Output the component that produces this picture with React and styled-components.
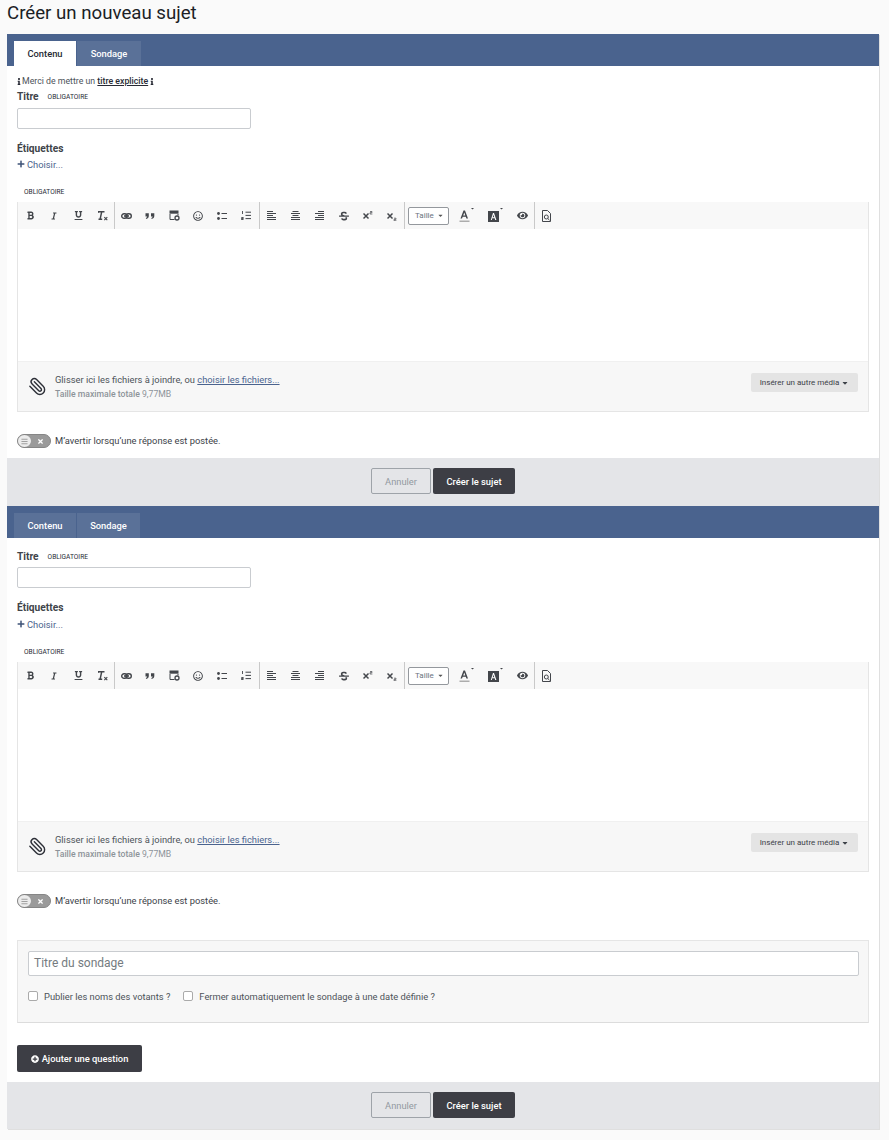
import React from "react";
import styled, { createGlobalStyle } from "styled-components";
import {
  FaBold,
  FaItalic,
  FaUnderline,
  FaRegSmile,
  FaStrikethrough,
  FaEye,
  FaPlus,
  FaPlusCircle,
  FaInfo,
  FaCaretDown,
  FaTimes,
  FaBars,
} from "react-icons/fa";
import { Paperclip } from "lucide-react";

const GlobalStyle = createGlobalStyle`
  html, body {
    margin: 0;
    padding: 0;
    background: #fafafa;
    font-family: Roboto, "Liberation Sans", sans-serif;
    color: #272a34;
  }
`;

const Page = styled.div`
  width: 889px;
  height: 1140px;
  overflow: hidden;
`;

const PageTitle = styled.h1`
  margin: 0;
  padding: 0 0 0 7px;
  height: 34px;
  font-size: 18.67px;
  line-height: 26px;
  font-weight: 400;
  color: #1c1f26;
`;

const Panel = styled.div`
  width: 872px;
  margin-left: 7px;
  background: #fff;
  box-shadow: 1px 1px 0 #dfdfdf;
`;

const TabBar = styled.div`
  display: flex;
  align-items: flex-end;
  gap: 1px;
  height: 32px;
  padding-left: 7px;
  background: #4a638e;
`;

const Tab = styled.div`
  width: ${(p) => p.$width}px;
  height: 25px;
  display: flex;
  align-items: center;
  justify-content: center;
  font-size: 9.33px;
  font-weight: 500;
  color: ${(p) => (p.$active ? "#272a34" : "#fff")};
  background: ${(p) => (p.$active ? "#fff" : "#5a7198")};
`;

const Body = styled.div`
  padding: ${(p) => p.$top}px 10px 0;
`;

const Notice = styled.div`
  display: flex;
  align-items: center;
  height: 12px;
  margin-bottom: 2px;
  font-size: 8.75px;
  white-space: pre;
  color: #4d5359;

  svg {
    font-size: 7px;
    width: 4px;
    color: #272a34;
  }

  a {
    font-weight: 500;
    color: #272a34;
    text-decoration: underline;
  }
`;

const NoticeText = styled.span`
  margin: 0 2px 0 1px;
`;

const FieldLabel = styled.div`
  display: flex;
  align-items: center;
  gap: 9px;
  height: 14px;
  font-size: 10.2px;
  font-weight: 700;
  color: #40444a;
`;

const Required = styled.span`
  padding-top: 1px;
  font-size: 6.6px;
  font-weight: 400;
  color: #272a34;
`;

const TextInput = styled.div`
  box-sizing: border-box;
  width: 234px;
  height: 21px;
  margin-top: ${(p) => p.$mt}px;
  background: #fff;
  border: 1px solid #c9ccd0;
  border-radius: 2px;
`;

const TagLabel = styled(FieldLabel)`
  margin-top: 12px;
`;

const TagChooser = styled.div`
  display: flex;
  align-items: center;
  gap: 2px;
  height: 12px;
  margin-top: ${(p) => p.$mt}px;
  font-size: 9.33px;
  color: #4a638e;

  svg {
    font-size: 8px;
    color: #3f5377;
  }
`;

const EditorRequired = styled(Required)`
  display: block;
  height: 8px;
  padding-top: 0;
  line-height: 8px;
  margin: 18px 0 6px 7px;
`;

const Editor = styled.div`
  border: 1px solid #e5e5e5;
  border-top: 0;
`;

const Toolbar = styled.div`
  display: flex;
  align-items: center;
  height: 27px;
  background: #f8f8f8;
`;

const ToolGroup = styled.div`
  display: flex;
  align-items: center;
  height: 27px;
  padding-right: ${(p) => p.$pr ?? 0}px;
  box-shadow: 1px 0 0 #c9c9c9;
`;

const Tool = styled.span`
  box-sizing: border-box;
  width: ${(p) => p.$width ?? 24}px;
  height: 27px;
  padding-left: ${(p) => p.$pl ?? 0}px;
  display: flex;
  align-items: center;
  justify-content: center;
  color: #43464b;

  svg {
    display: block;
  }
`;

const SizeSelect = styled.div`
  box-sizing: border-box;
  display: flex;
  align-items: center;
  justify-content: space-between;
  width: 41px;
  height: 18px;
  margin: 0 1px 0 4px;
  padding: 0 4px 0 6px;
  background: #fff;
  border: 1px solid #94989d;
  border-radius: 2px;
  font-size: 8px;
  color: #6b7480;

  svg {
    font-size: 7px;
    color: #555;
  }
`;

const WriteArea = styled.div`
  height: 132px;
  background: #fff;
`;

const AttachBar = styled.div`
  display: flex;
  align-items: center;
  height: 50px;
  padding: 0 10px 0 9px;
  background: #f7f7f7;
  border-top: 1px solid #f0f0f0;
  box-sizing: border-box;
`;

const Clip = styled.div`
  width: 20px;
  height: 20px;
  margin-right: 8px;
  transform: scaleX(-1);
  color: #2d3038;
`;

const AttachText = styled.div`
  flex: 1;
  font-size: 9.33px;
  line-height: 14px;
  color: #4d5359;

  a {
    color: #4a638e;
    text-decoration: underline;
  }
`;

const MaxSize = styled.div`
  font-size: 8.67px;
  color: #8d9399;

  b {
    font-weight: 500;
  }
`;

const MediaButton = styled.div`
  align-self: flex-start;
  display: flex;
  align-items: center;
  justify-content: center;
  gap: 2px;
  width: 107px;
  height: 19px;
  margin-top: 11px;
  background: #e4e4e4;
  border-radius: 2px;
  font-size: 8px;
  color: #3d4248;

  svg {
    font-size: 8px;
  }
`;

const FollowRow = styled.div`
  display: flex;
  align-items: flex-start;
  gap: 4px;
  height: 14px;
  margin-top: 21px;
  font-size: 9.33px;
  line-height: 16px;
  color: #3c4248;
`;

const Toggle = styled.div`
  box-sizing: border-box;
  display: flex;
  align-items: center;
  justify-content: space-between;
  width: 34px;
  height: 14px;
  margin-top: 1px;
  padding: 0 6px 0 0;
  background: #9a9a9a;
  border: 1px solid #868686;
  border-radius: 8px;
`;

const Knob = styled.span`
  width: 13px;
  height: 12px;
  display: flex;
  align-items: center;
  justify-content: center;
  background: #ececec;
  border-radius: 50%;
  color: #a0a0a0;

  svg {
    font-size: 7px;
  }
`;

const ToggleCross = styled.span`
  display: flex;
  color: #fff;

  svg {
    font-size: 7px;
  }
`;

const Footer = styled.div`
  box-sizing: border-box;
  display: flex;
  align-items: flex-start;
  justify-content: center;
  gap: 2px;
  height: ${(p) => p.$height}px;
  margin-top: ${(p) => p.$mt}px;
  padding-top: 10px;
  background: #e4e5e8;
`;

const CancelButton = styled.div`
  box-sizing: border-box;
  width: 60px;
  height: 26px;
  display: flex;
  align-items: center;
  justify-content: center;
  border: 1px solid #9ea3a9;
  border-radius: 2px;
  font-size: 9.33px;
  color: #9299a0;
`;

const DarkButton = styled.div`
  width: ${(p) => p.$width}px;
  height: ${(p) => p.$height}px;
  display: flex;
  align-items: center;
  justify-content: center;
  gap: 3px;
  background: #3d3e45;
  border-radius: 2px;
  font-size: 9.33px;
  font-weight: 500;
  color: #fff;
`;

const PollBox = styled.div`
  box-sizing: border-box;
  height: 83px;
  margin-top: 33px;
  padding: 10px 9px 10px 10px;
  background: #f7f7f7;
  border: 1px solid #e5e5e5;
  border-bottom-color: #dcdcdc;
`;

const PollInput = styled.div`
  box-sizing: border-box;
  height: 25px;
  padding: 0 0 1px 5px;
  display: flex;
  align-items: center;
  background: #fff;
  border: 1px solid #c9ccd0;
  border-radius: 2px;
  font-size: 12px;
  color: #757b80;
`;

const PollOptions = styled.div`
  display: flex;
  align-items: center;
  height: 12px;
  margin-top: 14px;
  font-size: 9.33px;
  color: #4d5359;
`;

const Check = styled.span`
  box-sizing: border-box;
  width: 10px;
  height: 10px;
  margin-right: 6px;
  margin-left: ${(p) => p.$ml ?? 0}px;
  background: #fff;
  border: 1px solid #aaa;
  border-radius: 2px;
`;

const AddRow = styled.div`
  margin-top: 22px;
`;

const ClearIcon = () => (
  <svg width="11" height="11" viewBox="0 0 11 11">
    <path d="M1 1h6.5v1.6H5.3L4 8.6h1.2V10H1.5V8.6h1L3.8 2.6H2.4L1 3z" fill="currentColor" />
    <path d="M7.3 7.2l3 3M10.3 7.2l-3 3" stroke="currentColor" strokeWidth="1.1" />
  </svg>
);
const LinkIcon = () => (
  <svg width="11" height="6" viewBox="0 0 11 6">
    <rect x="0.7" y="0.7" width="5.4" height="4.6" rx="2.3" fill="none" stroke="currentColor" strokeWidth="1.4" />
    <rect x="4.9" y="0.7" width="5.4" height="4.6" rx="2.3" fill="none" stroke="currentColor" strokeWidth="1.4" />
    <path d="M3 3h5" stroke="currentColor" strokeWidth="1.6" />
  </svg>
);
const QuoteIcon = () => (
  <svg width="10" height="6" viewBox="0 0 10 6">
    <path d="M0.5 0.3h3.3v2.6C3.8 4.5 2.8 5.5 1.2 5.9L0.8 5C1.6 4.7 2.1 4.2 2.2 3.5H0.5zM6 0.3h3.3v2.6C9.3 4.5 8.3 5.5 6.7 5.9L6.3 5C7.1 4.7 7.6 4.2 7.7 3.5H6z" fill="currentColor" />
  </svg>
);
const SpecialIcon = () => (
  <svg width="11" height="11" viewBox="0 0 11 11">
    <path d="M0.5 0.5h9v3.2h-9z" fill="currentColor" />
    <path d="M1 4v5.5h4.5M9 4v1.5" fill="none" stroke="currentColor" />
    <circle cx="8" cy="8" r="2" fill="none" stroke="currentColor" strokeWidth="1.3" />
  </svg>
);
const BulletIcon = () => (
  <svg width="10" height="8" viewBox="0 0 10 8">
    <circle cx="1.5" cy="1.5" r="1.4" fill="currentColor" />
    <circle cx="1.5" cy="6.5" r="1.4" fill="currentColor" />
    <path d="M4.5 1.5H10M4.5 6.5H10" stroke="currentColor" />
  </svg>
);
const NumberIcon = () => (
  <svg width="10" height="9" viewBox="0 0 10 9">
    <path d="M1.5 0v3M0.3 6.5h2v1h-2v1h2.2" fill="none" stroke="currentColor" strokeWidth="0.9" />
    <path d="M4.5 1.2H10M4.5 4.4H10M4.5 7.6H10" stroke="currentColor" />
  </svg>
);
const AlignIcon = ({ side }) => {
  const x = (w) => (side === "left" ? 0 : side === "center" ? (9 - w) / 2 : 9 - w);
  const rows = [
    [0.5, 6],
    [2.5, 9],
    [4.5, 6],
    [6.5, 9],
    [8.5, 9],
  ];
  return (
    <svg width="9" height="9" viewBox="0 0 9 9">
      {rows.map(([y, w]) => (
        <path key={y} d={`M${x(w)} ${y}h${w}`} stroke="currentColor" />
      ))}
    </svg>
  );
};
const ScriptIcon = ({ sub }) => (
  <svg width="10" height="10" viewBox="0 0 10 10">
    <path d="M0.5 2.5l5 5M5.5 2.5l-5 5" stroke="currentColor" strokeWidth="1.5" />
    <path
      d={sub ? "M7 7.2h2v1.2H7v1.3h2.4" : "M7 0.5h2v1.2H7V3h2.4"}
      fill="none"
      stroke="currentColor"
      strokeWidth="0.7"
    />
  </svg>
);
const TextColorIcon = () => (
  <svg width="15" height="15" viewBox="0 0 15 15">
    <path d="M1.5 10.5L4.5 2.5h1.5l3 8H7.4L6.8 8.8H3.7L3 10.5zM4.2 7.4h2.1L5.3 4.5z" fill="currentColor" />
    <path d="M0.5 13.2h10" stroke="#9a9a9a" strokeWidth="1.2" />
    <path d="M12 0h3l-1.5 1.6z" fill="currentColor" />
  </svg>
);
const BgColorIcon = () => (
  <svg width="15" height="15" viewBox="0 0 15 15">
    <path d="M0 3h11v11H0z" fill="currentColor" />
    <path d="M2.8 12L5 5h1l2.4 7H7.2l-.5-1.7H4.3L3.8 12zM4.7 9.2h1.6L5.5 6.8z" fill="#fff" />
    <path d="M12 0h3l-1.5 1.6z" fill="currentColor" />
  </svg>
);
const PreviewIcon = () => (
  <svg width="9" height="12" viewBox="0 0 9 12">
    <path d="M0.5 0.5h5l3 3v8h-8z" fill="none" stroke="currentColor" />
    <circle cx="4.3" cy="7" r="2" fill="none" stroke="currentColor" />
    <path d="M5.8 8.5l1.7 1.7" stroke="currentColor" />
  </svg>
);

const EditorBlock = () => (
  <Editor>
    <Toolbar>
      <ToolGroup>
        <Tool><FaBold size={9} /></Tool>
        <Tool><FaItalic size={8} /></Tool>
        <Tool><FaUnderline size={9} /></Tool>
        <Tool><ClearIcon /></Tool>
      </ToolGroup>
      <ToolGroup $pr={1}>
        <Tool><LinkIcon /></Tool>
        <Tool><QuoteIcon /></Tool>
        <Tool><SpecialIcon /></Tool>
        <Tool><FaRegSmile size={10} /></Tool>
        <Tool><BulletIcon /></Tool>
        <Tool><NumberIcon /></Tool>
      </ToolGroup>
      <ToolGroup $pr={1}>
        <Tool><AlignIcon side="left" /></Tool>
        <Tool><AlignIcon side="center" /></Tool>
        <Tool><AlignIcon side="right" /></Tool>
        <Tool $pl={1}><FaStrikethrough size={10} /></Tool>
        <Tool $pl={1}><ScriptIcon /></Tool>
        <Tool $pl={1}><ScriptIcon sub /></Tool>
      </ToolGroup>
      <ToolGroup>
        <SizeSelect>Taille <FaCaretDown /></SizeSelect>
        <Tool $width={29} $pl={3}><TextColorIcon /></Tool>
        <Tool $width={29} $pl={3}><BgColorIcon /></Tool>
        <Tool $width={26} $pl={2}><FaEye size={11} /></Tool>
      </ToolGroup>
      <Tool><PreviewIcon /></Tool>
    </Toolbar>
    <WriteArea />
    <AttachBar>
      <Clip><Paperclip size={19} strokeWidth={1.8} /></Clip>
      <AttachText>
        Glisser ici les fichiers à joindre, ou <a>choisir les fichiers...</a>
        <MaxSize><b>Taille maximale totale</b> 9,77MB</MaxSize>
      </AttachText>
      <MediaButton>Insérer un autre média <FaCaretDown /></MediaButton>
    </AttachBar>
  </Editor>
);

const FormFields = ({ notice }) => (
  <>
    {notice && (
      <Notice>
        <FaInfo />
        <NoticeText>Merci de mettre un <a>titre explicite</a></NoticeText>
        <FaInfo />
      </Notice>
    )}
    <FieldLabel>
      Titre <Required>OBLIGATOIRE</Required>
    </FieldLabel>
    <TextInput $mt={notice ? 5 : 4} />
    <TagLabel>Étiquettes</TagLabel>
    <TagChooser $mt={notice ? 3 : 4}>
      <FaPlus /> Choisir...
    </TagChooser>
    <EditorRequired>OBLIGATOIRE</EditorRequired>
    <EditorBlock />
    <FollowRow>
      <Toggle>
        <Knob><FaBars /></Knob>
        <ToggleCross><FaTimes /></ToggleCross>
      </Toggle>
      M’avertir lorsqu’une réponse est postée.
    </FollowRow>
  </>
);

const Actions = ({ height, mt }) => (
  <Footer $height={height} $mt={mt}>
    <CancelButton>Annuler</CancelButton>
    <DarkButton $width={82} $height={26}>Créer le sujet</DarkButton>
  </Footer>
);

const Tabs = ({ active }) => (
  <TabBar>
    <Tab $width={62} $active={active}>Contenu</Tab>
    <Tab $width={active ? 64 : 63}>Sondage</Tab>
  </TabBar>
);

export default function App() {
  return (
    <Page>
      <GlobalStyle />
      <PageTitle>Créer un nouveau sujet</PageTitle>
      <Panel>
        <Tabs active />
        <Body $top={9}>
          <FormFields notice />
        </Body>
        <Actions height={48} mt={11} />
        <Tabs />
        <Body $top={11}>
          <FormFields />
          <PollBox>
            <PollInput>Titre du sondage</PollInput>
            <PollOptions>
              <Check />
              Publier les noms des votants ?
              <Check $ml={13} />
              Fermer automatiquement le sondage à une date définie ?
            </PollOptions>
          </PollBox>
          <AddRow>
            <DarkButton $width={125} $height={27}>
              <FaPlusCircle size={8} /> Ajouter une question
            </DarkButton>
          </AddRow>
        </Body>
        <Actions height={47} mt={10} />
      </Panel>
    </Page>
  );
}
